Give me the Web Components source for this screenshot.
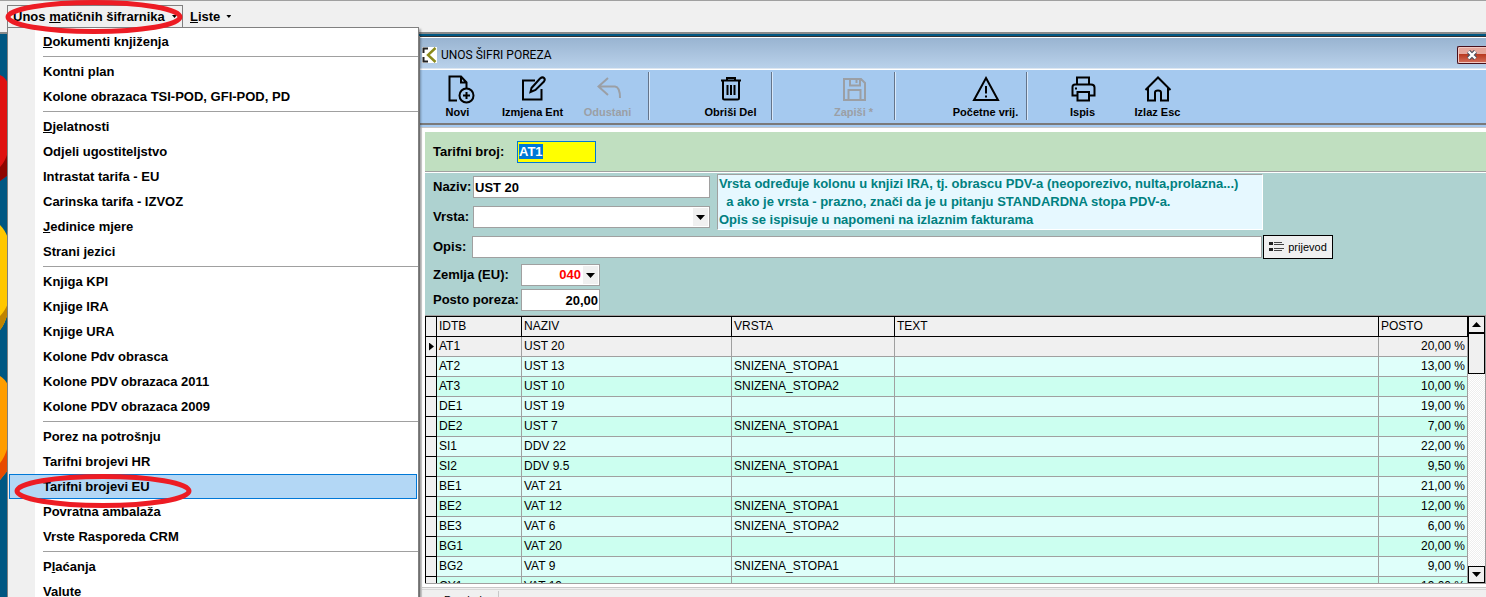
<!DOCTYPE html>
<html lang="hr">
<head>
<meta charset="utf-8">
<title>Unos šifri poreza</title>
<style>
  html, body { margin: 0; height: 100%; }
  body { overflow: hidden; background: #005782; color: #000; font: 13px/16px "Liberation Sans", Arial, sans-serif; }
</style>
</head>
<body>
<erp-app></erp-app>
<script>
function define(name, html, setup) {
  const template = document.createElement('template');
  template.innerHTML = '<style>*{box-sizing:border-box}</style>' + html;
  customElements.define(name, class extends HTMLElement {
    constructor() {
      super();
      this.attachShadow({ mode: 'open' }).append(template.content.cloneNode(true));
    }
    connectedCallback() { if (setup) setup(this, this.shadowRoot); }
  });
}

/* ---------- menu ---------- */
define('menu-tab', `
<style>
  :host { display: block; }
  button { display: flex; align-items: center; gap: 6px; height: 22px; padding: 0 6px; border: 1px solid transparent; border-bottom: 0;
    background: none; color: inherit; font: bold 13px/16px "Liberation Sans", Arial, sans-serif; white-space: nowrap; }
  :host([open]) button { border-color: #808080; padding: 0 5px; width: 176px; gap: 4px; justify-content: space-between; }
  i { width: 5px; height: 3px; background: #000; clip-path: polygon(0 0, 100% 0, 50% 100%); }
</style>
<button type="button"><span><slot></slot></span><i></i></button>`);

define('menu-bar', `
<style>
  :host { display: flex; align-items: flex-end; height: 34px; padding: 0 0 5px 7px; background: #f0f0f0;
    border-top: 1px solid #a0a0a0; border-bottom: 2px solid #8a8a8a; box-sizing: border-box; }
</style>
<slot></slot>`);

define('menu-item', `
<style>
  :host { display: block; }
  button { display: block; width: 100%; height: 25px; padding: 0 0 0 33px; border: 1px solid transparent; background: none; text-align: left;
    color: #000; font: bold 13px/16px "Liberation Sans", Arial, sans-serif; white-space: nowrap; }
  :host([active]) button { background: #b3d7f5; border-color: #0078d7; }
</style>
<button type="button" role="menuitem"><slot></slot></button>`);

define('menu-separator', `
<style>:host { display: block; height: 1px; margin: 2px 0 2px 34px; background: #a0a0a0; }</style>`);

define('menu-panel', `
<style>
  :host { display: block; box-sizing: border-box; width: 412px; padding: 1px 1px 0; border: 1px solid #808080;
    background: linear-gradient(90deg, #f0f0f0 27px, #fff 27px); box-shadow: 2px 2px 2px rgba(0,0,0,.3); }
  ::slotted(menu-separator) { margin-right: -1px; }
</style>
<slot></slot>`);

/* ---------- toolbar ---------- */
const ICONS = {
  novi: '<path d="M13 25.500H5.500V1.500H17L22.500 7.500V13M17 1.500V7.500H22.500"/><circle cx="22.500" cy="20.500" r="7"/><path d="M22.500 17V24M19 20.500H26"/>',
  izmjena: '<path d="M16 5.500H4V24.500H22.500V14"/><path d="M12.500 13L21 3.500Q23.500 1.500 25 3T25 6.500L16.500 15L11.500 17Z"/>',
  odustani: '<path d="M14 3L4.500 11.500L14 20M5 11.500H21Q26 12 26 23"/>',
  obrisi: '<path d="M4 5.500H24M10 5V3H18V5M6 6V23Q6 24.500 7.500 24.500H20.500Q22 24.500 22 23V6M10.500 10V20M14 10V20M17.500 10V20"/>',
  zapisi: '<path d="M4 4H21L25 8V25H4ZM8.500 25V15H20.500V25M10 4V10.500H20V4M16.500 4V8"/>',
  pocetne: '<path d="M14 3L26 25H2Z"/><path d="M14 11V18.500M14 20.500V22.500"/>',
  ispis: '<path d="M8 9V2.500H20V9M8 20.500H3.500V12Q3.500 9.500 6 9.500H22Q25.500 9.500 25.500 12.500V20.500H20M8.500 17H20V25.500H8.500ZM6 13.500H8"/>',
  izlaz: '<path d="M1.500 15L14 2.500L26.500 15M4 13V25.500H11V17.500Q11 15.500 14 15.500T17 17.500V25.500H24V13"/>'
};
define('tool-button', `
<style>
  :host { display: block; width: 75px; }
  button { display: flex; flex-direction: column; align-items: center; gap: 2px; width: 100%; padding: 0; border: 0; background: none;
    color: #000; font: bold 11px/14px "Liberation Sans", Arial, sans-serif; white-space: nowrap; }
  button:disabled { color: #9b9fa5; }
  svg { width: 28px; height: 28px; overflow: visible; fill: none; stroke: currentColor; stroke-width: 2; }
</style>
<button type="button"><svg viewBox="0 0 28 28"></svg><span><slot></slot></span></button>`,
(host, root) => {
  root.querySelector('svg').innerHTML = ICONS[host.getAttribute('icon')];
  root.querySelector('button').disabled = host.hasAttribute('disabled');
});

define('tool-group', `
<style>
  :host { display: flex; align-items: flex-start; padding: 3px 3px 0 44px; border-right: 1px solid #64748a; box-shadow: 1px 0 #d8e8fa; }
  :host([first]) { padding-left: 0; }
  :host([wide]) { padding-left: 53px; }
  :host([last]) { padding-left: 18px; border: 0; box-shadow: none; }
</style>
<slot></slot>`);

define('tool-bar', `
<style>
  :host { display: block; background: #a5c9ef; border-bottom: 1px solid #c8c8c8; padding-bottom: 2px; }
  nav { display: flex; height: 55px; padding: 2px 0 3px; border-bottom: 2px solid #7a7a7a; }
</style>
<nav><slot></slot></nav>`);

/* ---------- window ---------- */
define('title-bar', `
<style>
  :host { display: flex; align-items: center; gap: 4px; height: 30px; padding: 4px 0 0 2px; box-sizing: border-box;
    background: linear-gradient(#99b4d1, #b9d1ea); font: 12px/16px Roboto, sans-serif; }
  span { flex: 1; white-space: nowrap; }
  .logo { width: 15px; height: 16px; background: #fff; }
  button { width: 29px; height: 18px; margin-top: -1px; padding: 0; border: 1px solid #47101c; border-right: 0; border-radius: 2px 0 0 2px;
    background: linear-gradient(#e6a79c 0 45%, #b8381f 45%, #d4705c); box-shadow: inset 1px 1px #f3c9c2, inset 0 -1px #f3c9c2; }
  button svg { display: block; margin: auto; width: 12px; height: 10px; }
</style>
<svg class="logo" viewBox="0 0 15 16" fill="none"><path d="M6 1.500H1.500V6M1.500 10V14.500H6" stroke="#222" stroke-width="2"/><path d="M13.500 1L6 8L13.500 15" stroke="#8a8a1c" stroke-width="2.400"/></svg>
<span><slot></slot></span>
<button type="button" aria-label="Zatvori"><svg viewBox="0 0 12 10"><path d="M2.500 1.500L9.500 8.500M9.500 1.500L2.500 8.500" stroke="#4b5060" stroke-width="4.500"/><path d="M2.500 1.500L9.500 8.500M9.500 1.500L2.500 8.500" stroke="#fff" stroke-width="2.400"/></svg></button>`);

/* ---------- form ---------- */
define('tax-form', `
<style>
  :host { display: block; font: bold 13px/16px "Liberation Sans", Arial, sans-serif; }
  .key { display: flex; align-items: center; height: 40px; padding: 0 8px; background: #c0dfc0; border-bottom: 1px solid #a0a0a0; }
  .key label { width: 84px; }
  .body { display: flex; flex-direction: column; padding: 1px 8px 4px; background: #aed2d0; border-top: 1px solid #fff; }
  input, select { height: 22px; min-width: 0; margin: 0; padding: 0 1px; border: 1px solid #a0a0a0; border-radius: 0; outline: 0; background: #fff;
    color: #000; font: inherit; appearance: none; }
  label { white-space: nowrap; }
  #tarifa { width: 79px; border-color: #0078d7; background: #ff0; caret-color: transparent; }
  #tarifa::selection { background: #0078d7; color: #fff; }
  .top { display: flex; gap: 7px; }
  .pair { display: grid; grid-template-columns: 40px 237px; grid-auto-rows: 22px; row-gap: 8px; align-items: center; padding-top: 2px; }
  .combo { display: grid; position: relative; }
  .combo::after { content: ""; position: absolute; right: 2px; top: 2px; width: 15px; height: 18px; background: #f0f0f0; pointer-events: none; }
  .combo i { position: absolute; z-index: 1; right: 5px; top: 9px; width: 9px; height: 5px; background: #000; clip-path: polygon(0 0, 100% 0, 50% 100%); pointer-events: none; }
  .hint { flex: 0 1 546px; height: 56px; margin: 0; padding: 0 1px; border: 1px solid #fff; border-top-color: #a0a0a0; border-left-color: #a0a0a0;
    background: #e6f8ff; color: #008080; line-height: 18px; white-space: pre; overflow: hidden; }
  .opis { display: flex; align-items: center; margin: 5px 145px 5px 0; }
  .opis label { width: 39px; }
  .opis input { flex: 1; }
  button { display: flex; align-items: center; justify-content: center; gap: 4px; width: 70px; height: 24px; margin-left: 1px; padding: 0; border: 1px solid #000;
    background: #f0f0f0; color: #000; font: 11px/14px "Liberation Sans", Arial, sans-serif; }
  .low { display: grid; grid-template-columns: 88px 79px; row-gap: 3px; align-items: center; }
  #zemlja { padding-right: 18px; color: #f00; text-align: right; text-align-last: right; }
  #posto { text-align: right; }
</style>
<div class="key"><label for="tarifa">Tarifni broj:</label><input id="tarifa" value="AT1"></div>
<div class="body">
  <div class="top">
    <div class="pair">
      <label for="naziv">Naziv:</label><input id="naziv" value="UST 20">
      <label for="vrsta">Vrsta:</label><div class="combo"><select id="vrsta"><option></option></select><i></i></div>
    </div>
    <p class="hint">Vrsta određuje kolonu u knjizi IRA, tj. obrascu PDV-a (neoporezivo, nulta,prolazna...)
  a ako je vrsta - prazno, znači da je u pitanju STANDARDNA stopa PDV-a.
Opis se ispisuje u napomeni na izlaznim fakturama</p>
  </div>
  <div class="opis"><label for="opis">Opis:</label><input id="opis"><button type="button"><svg width="15" height="10" viewBox="0 0 15 10"><path d="M0 0h4v3H0zM0 6h4v3H0z" fill="#222"/><path d="M5 .5h8M5 2.500h10M5 6.500h10M5 8.500h8" stroke="#444"/></svg>prijevod</button></div>
  <div class="low">
    <label for="zemlja">Zemlja (EU):</label><div class="combo"><select id="zemlja"><option>040</option></select><i></i></div>
    <label for="posto">Posto poreza:</label><input id="posto" value="20,00">
  </div>
</div>`, (host, root) => {
  const field = root.getElementById('tarifa');
  field.focus();
  field.select();
});

/* ---------- table ---------- */
const ROWS = [
  ['AT1', 'UST 20', '', '20,00 %'], ['AT2', 'UST 13', 'SNIZENA_STOPA1', '13,00 %'], ['AT3', 'UST 10', 'SNIZENA_STOPA2', '10,00 %'],
  ['DE1', 'UST 19', '', '19,00 %'], ['DE2', 'UST 7', 'SNIZENA_STOPA1', '7,00 %'], ['SI1', 'DDV 22', '', '22,00 %'],
  ['SI2', 'DDV 9.5', 'SNIZENA_STOPA1', '9,50 %'], ['BE1', 'VAT 21', '', '21,00 %'], ['BE2', 'VAT 12', 'SNIZENA_STOPA1', '12,00 %'],
  ['BE3', 'VAT 6', 'SNIZENA_STOPA2', '6,00 %'], ['BG1', 'VAT 20', '', '20,00 %'], ['BG2', 'VAT 9', 'SNIZENA_STOPA1', '9,00 %'],
  ['CY1', 'VAT 19', '', '19,00 %']
];
define('tax-table', `
<style>
  :host { display: flex; box-sizing: border-box; height: 269px; border-top: 1px solid #a0a0a0; border-bottom: 1px solid #a0a0a0; border-right: 1px solid #a0a0a0; overflow: hidden; background: #fff; }
  .list { flex: 1; overflow: hidden; border-top: 1px solid #000; border-left: 1px solid #000; }
  table { width: 100%; table-layout: fixed; border-collapse: separate; border-spacing: 0; font: 12px/15px "Liberation Sans", Arial, sans-serif; }
  th, td { height: 20px; padding: 0 2px; border-right: 1px solid #a0a0a0; border-bottom: 1px solid #a0a0a0; font-weight: normal; text-align: left; white-space: nowrap; overflow: hidden; }
  th, td:first-child { background: #f0f0f0; border-color: #000; }
  td:first-child { padding: 0; }
  tr:nth-child(odd) td:not(:first-child) { background: #ccfff0; }
  tr:nth-child(even) td:not(:first-child) { background: #dffffa; }
  tbody tr:first-child td:not(:first-child) { background: #f0f0f0; }
  td:last-child { text-align: right; }
  i { display: block; width: 5px; height: 8px; margin-left: 3px; background: #000; clip-path: polygon(0 0, 100% 50%, 0 100%); }
  .bar { display: flex; flex-direction: column; width: 17px; background: repeating-conic-gradient(#eee 0 25%, #fff 0 50%) 0 0 / 2px 2px; }
  .bar button { height: 17px; padding: 0; border: 1px solid #000; background: #f0f0f0; }
  .bar svg { display: block; margin: auto; }
  .thumb { height: 41px; border: 1px solid #000; background: #f0f0f0; margin-bottom: auto; }
</style>
<div class="list"><table>
<colgroup><col style="width:11px"><col style="width:85px"><col style="width:210px"><col style="width:163px"><col><col style="width:89px"></colgroup>
<thead><tr><th></th><th>IDTB</th><th>NAZIV</th><th>VRSTA</th><th>TEXT</th><th>POSTO</th></tr></thead><tbody></tbody></table></div>
<div class="bar"><button type="button" aria-label="Gore"><svg width="9" height="5"><path d="M0 5L4.500 0L9 5Z"/></svg></button><div class="thumb"></div>
<button type="button" aria-label="Dolje"><svg width="9" height="5"><path d="M0 0L4.500 5L9 0Z"/></svg></button></div>`,
(host, root) => {
  root.querySelector('tbody').innerHTML = ROWS.map(([id, name, kind, rate], n) =>
    `<tr><td>${n ? '' : '<i></i>'}</td><td>${id}</td><td>${name}</td><td>${kind}</td><td></td><td>${rate}</td></tr>`).join('');
});

define('tab-strip', `
<style>
  :host { display: block; margin-top: 3px; border-top: 1px solid #c8c8c8; background: #f0f0f0; }
  div { display: flex; margin-top: 1px; border-top: 1px solid #d8d8d8; padding-top: 1px; }
  button { width: 77px; height: 18px; padding: 0 0 0 22px; border: 0; border-right: 1px solid #c8c8c8; background: #f0f0f0; color: #000; text-align: left; font: 11px/14px "Liberation Sans", Arial, sans-serif; }
</style>
<div><button type="button"><slot></slot></button></div>`);

define('mdi-window', `
<style>
  :host { display: block; box-sizing: border-box; border-left: 1px solid #9a9a9a; background: #fff; }
  .frame { border-top: 1px solid #333; padding-top: 1px; }
  .tools { padding-top: 1px; border-top: 1px solid #dde6f0; }
  .content { padding: 4px 0 0; border-left: 2px solid #d8d8d8; }
  .inset { margin-left: 3px; }
</style>
<div class="frame">
  <slot name="title"></slot>
  <div class="tools"><slot name="tools"></slot></div>
  <div class="content"><div class="inset"><slot></slot></div><slot name="tabs"></slot></div>
</div>`);

define('red-ring', `
<style>
  :host { display: block; width: 178px; height: 34px; pointer-events: none; }
  svg { display: block; width: 100%; height: 100%; }
</style>
<svg viewBox="0 0 178 34"><ellipse cx="89" cy="17" rx="86" ry="14.500" fill="none" stroke="#ed1c24" stroke-width="5"/></svg>`);

/* ---------- application ---------- */
define('erp-app', `
<style>
  :host { display: block; position: relative; height: 100vh; overflow: hidden; }
  .desktop { display: flex; padding-top: 2px; }
  .wallpaper { flex: 0 0 419px; height: 563px; }
  .wallpaper svg { display: block; }
  mdi-window { flex: 1; min-width: 0; }
  menu-panel { position: absolute; left: 7px; top: 27px; }
  red-ring { position: absolute; left: 5px; top: 0; }
  red-ring.second { left: 14px; top: 474px; }
</style>
<menu-bar>
  <menu-tab open>Unos <u>m</u>atičnih šifrarnika</menu-tab>
  <menu-tab><u>L</u>iste</menu-tab>
</menu-bar>
<div class="desktop">
  <div class="wallpaper"><svg width="8" height="561" viewBox="0 36 8 561">
    <path d="M0 75Q5 77 8 83V175L0 181Z" fill="#df1110"/><path d="M0 167Q5 162 8 152V175L0 181Z" fill="#8e0500"/>
    <path d="M0 225Q5 230 8 238V312Q5 324 0 330Z" fill="#ffc700"/><path d="M0 316Q5 311 8 303V312Q5 324 0 330Z" fill="#bf8300"/>
    <path d="M0 376Q5 379 8 385V470L0 480Z" fill="#ff9d00"/><path d="M0 463Q5 457 8 446V470L0 480Z" fill="#e84a00"/>
  </svg></div>
  <mdi-window>
    <title-bar slot="title">UNOS ŠIFRI POREZA</title-bar>
    <tool-bar slot="tools">
      <tool-group first><tool-button icon="novi">Novi</tool-button><tool-button icon="izmjena">Izmjena Ent</tool-button><tool-button icon="odustani" disabled>Odustani</tool-button></tool-group>
      <tool-group><tool-button icon="obrisi">Obriši Del</tool-button></tool-group>
      <tool-group><tool-button icon="zapisi" disabled>Zapiši *</tool-button></tool-group>
      <tool-group wide><tool-button icon="pocetne">Početne vrij.</tool-button></tool-group>
      <tool-group last><tool-button icon="ispis">Ispis</tool-button><tool-button icon="izlaz">Izlaz Esc</tool-button></tool-group>
    </tool-bar>
    <tax-form></tax-form>
    <tax-table></tax-table>
    <tab-strip slot="tabs">Pregled</tab-strip>
  </mdi-window>
</div>
<menu-panel role="menu">
  <menu-item><u>D</u>okumenti knjiženja</menu-item><menu-separator></menu-separator>
  <menu-item>Kontni plan</menu-item><menu-item>Kolone obrazaca TSI-POD, GFI-POD, PD</menu-item><menu-separator></menu-separator>
  <menu-item><u>D</u>jelatnosti</menu-item><menu-item>Odjeli ugostiteljstvo</menu-item><menu-item>Intrastat tarifa - EU</menu-item>
  <menu-item>Carinska tarifa - IZVOZ</menu-item><menu-item><u>J</u>edinice mjere</menu-item><menu-item>Strani jezici</menu-item><menu-separator></menu-separator>
  <menu-item>Knjiga KPI</menu-item><menu-item>Knjige IRA</menu-item><menu-item>Knjige URA</menu-item><menu-item>Kolone Pdv obrasca</menu-item>
  <menu-item>Kolone PDV obrazaca 2011</menu-item><menu-item>Kolone PDV obrazaca 2009</menu-item><menu-separator></menu-separator>
  <menu-item>Porez na potrošnju</menu-item><menu-item>Tarifni brojevi HR</menu-item><menu-item active>Tarifni brojevi EU</menu-item>
  <menu-item>Povratna ambalaža</menu-item><menu-item>Vrste Rasporeda CRM</menu-item><menu-separator></menu-separator>
  <menu-item>P<u>l</u>aćanja</menu-item><menu-item>Valute</menu-item>
</menu-panel>
<red-ring></red-ring>
<red-ring class="second"></red-ring>`);
</script>
</body>
</html>
